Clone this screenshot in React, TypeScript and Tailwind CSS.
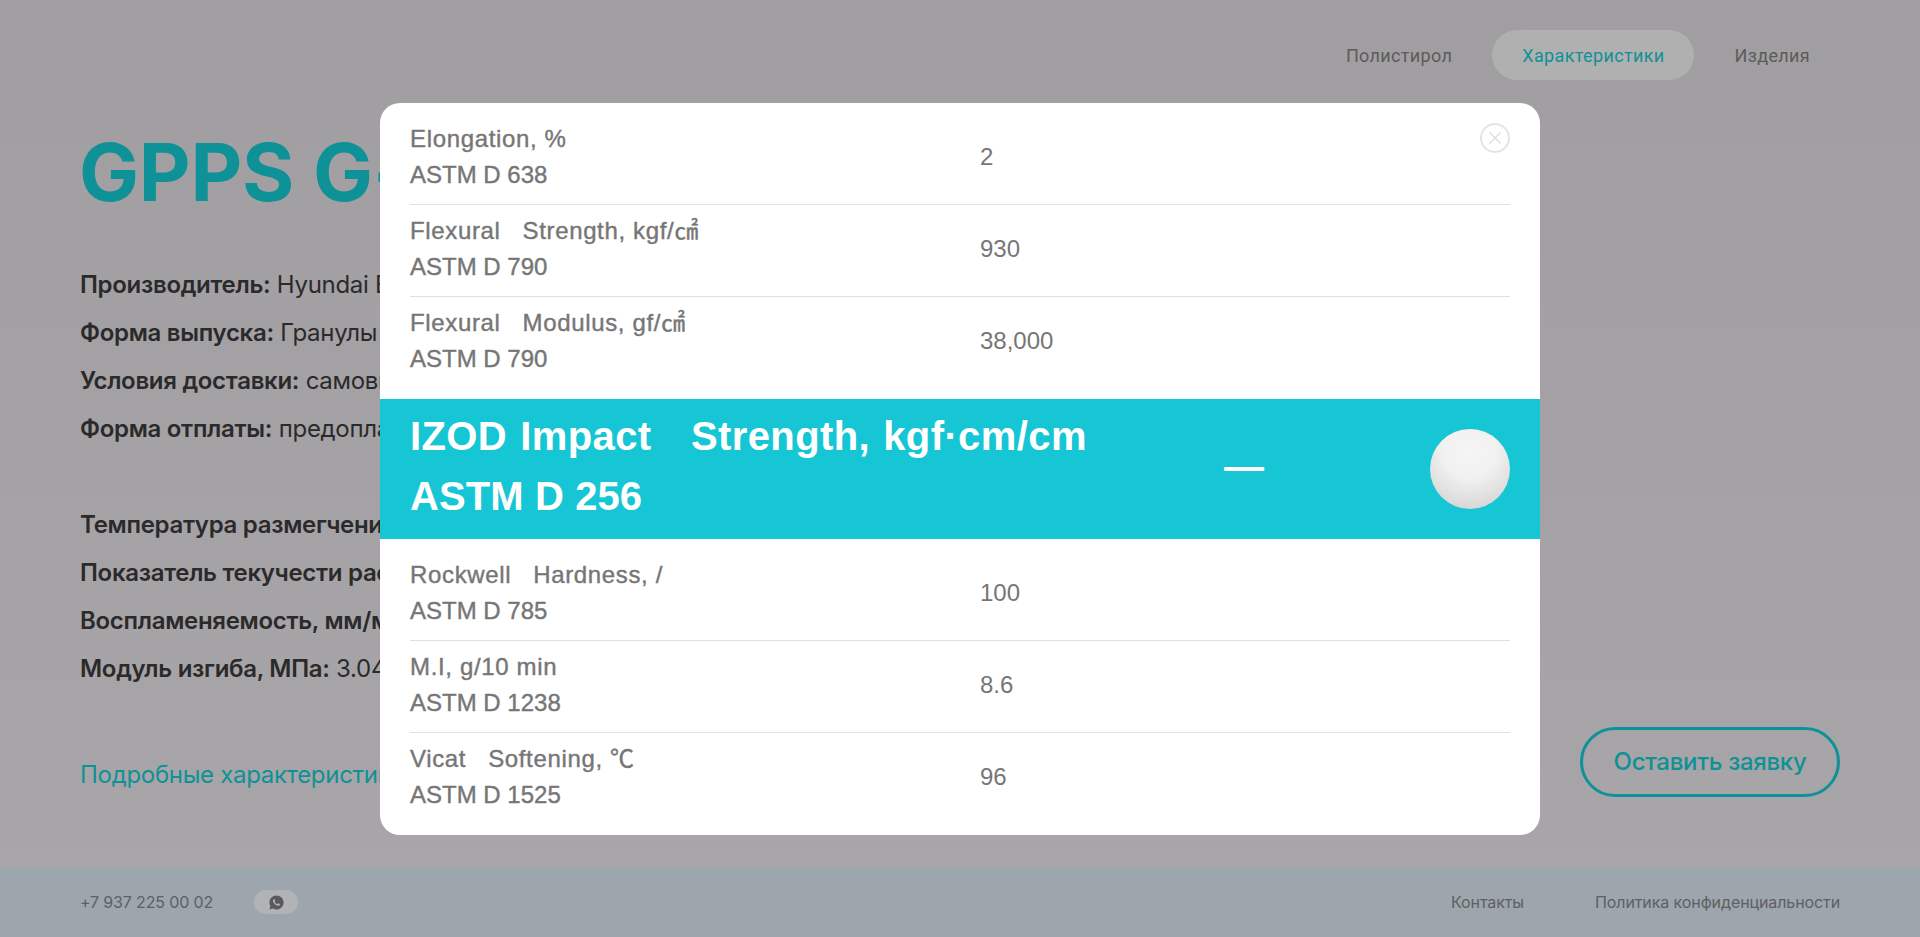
import React from "react";
import { RiWhatsappFill } from "react-icons/ri";

const sans = "font-['Inter','Noto_Sans',sans-serif]";
const modalFont = "font-['Liberation_Sans','Noto_Sans_CJK_KR',sans-serif]";

function Row({ a, b, v, last }: { a: string; b: string; v: string; last?: boolean }) {
  return (
    <div className={`flex items-center border-b pt-2 pb-[11px] ${last ? "border-transparent" : "border-[#e0e0e0]"}`}>
      <div className="w-[570px] shrink-0 whitespace-pre text-[24px] leading-[36px] text-[#767676] [-webkit-text-stroke:0.4px_#767676]">
        <div className="tracking-[0.65px]">{a}</div>
        <div>{b}</div>
      </div>
      <div className="text-[24px] leading-[36px] text-[#767676]">{v}</div>
    </div>
  );
}

function Spec({ k, v }: { k: string; v: string }) {
  return (
    <p className="h-12 whitespace-nowrap text-[24px] leading-[48px] tracking-[-0.3px] text-[#2a2a2b]">
      <b className="font-semibold">{k}</b> {v}
    </p>
  );
}

export default function App() {
  return (
    <div className={`relative flex h-[937px] flex-col overflow-hidden bg-linear-to-b from-[#a09ea0] to-[#a9a6a9] ${sans}`}>
      <header className="flex justify-end gap-[10px] pt-[30px] pr-20 font-['Roboto',sans-serif] text-[18px] tracking-[0.35px] text-[#5c5b5c]">
        <a className="flex h-[50px] items-center px-[30px]">Полистирол</a>
        <a className="flex h-[50px] items-center rounded-full bg-[#b0b0b0] px-[30px] text-[#0f9198]">Характеристики</a>
        <a className="flex h-[50px] items-center px-[30px]">Изделия</a>
      </header>

      <main className="flex flex-1 justify-between px-20 pt-[44px] pb-[70px]">
        <div className="w-[300px] overflow-hidden">
          <h1 className="-ml-px whitespace-nowrap text-[80px] leading-[96px] font-bold tracking-[-0.2px] text-[#0f9198]">GPPS G-144</h1>
          <div className="mt-[41px]">
            <Spec k="Производитель:" v="Hyundai Engineering Plastics" />
            <Spec k="Форма выпуска:" v="Гранулы" />
            <Spec k="Условия доставки:" v="самовывоз" />
            <Spec k="Форма отплаты:" v="предоплата" />
          </div>
          <div className="mt-12">
            <Spec k="Температура размегчения, °С:" v="96" />
            <Spec k="Показатель текучести расплава:" v="8.6" />
            <Spec k="Воспламеняемость, мм/мин:" v="38" />
            <Spec k="Модуль изгиба, МПа:" v="3.04" />
          </div>
          <a className="mt-16 block whitespace-nowrap text-[24px] leading-[36px] tracking-[-0.3px] text-[#0f9198]">Подробные характеристики</a>
        </div>
        <a className="flex h-[70px] w-[260px] items-center justify-center self-end rounded-full border-[3px] border-[#0f9198] text-[24px] font-medium tracking-[-0.3px] text-[#0f9198]">
          Оставить заявку
        </a>
      </main>

      <footer className="flex h-[70px] items-center justify-between bg-[#9da6ac] px-20 text-[16px] text-[#5e6062]">
        <div className="flex items-center gap-[41px]">
          <span className="tracking-[-0.15px]">+7 937 225 00 02</span>
          <span className="flex h-6 w-11 items-center justify-center rounded-full bg-[#b1b3b6]">
            <RiWhatsappFill className="text-[17px] text-[#5a5a5a]" />
          </span>
        </div>
        <div className="flex gap-[71px] tracking-[-0.1px]">
          <a>Контакты</a>
          <a>Политика конфиденциальности</a>
        </div>
      </footer>

      <div className={`absolute top-[103px] left-[380px] w-[1160px] overflow-hidden rounded-[20px] bg-white py-[10px] ${modalFont}`}>
        <button className="absolute top-5 right-[30px] flex h-[30px] w-[30px] items-center justify-center rounded-full border-2 border-[#e4e4e4]">
          <svg width="14" height="14" viewBox="0 0 14 14" fill="none" stroke="#dcdcdc" strokeWidth="1.2">
            <path d="M1.5 1.5l11 11M12.5 1.5l-11 11" />
          </svg>
        </button>
        <div className="px-[30px]">
          <Row a="Elongation, %" b="ASTM D 638" v="2" />
          <Row a="Flexural   Strength, kgf/㎠" b="ASTM D 790" v="930" />
          <Row a="Flexural   Modulus, gf/㎠" b="ASTM D 790" v="38,000" last />
        </div>
        <div className="my-[10px] flex h-[140px] items-center bg-[#16c6d4] px-[30px] text-white">
          <div className="-mt-[6px] w-[814px] shrink-0 whitespace-pre text-[40px] leading-[60px] font-bold">
            <div className="tracking-[0.4px] [word-spacing:1.6px]">IZOD Impact   Strength, kgf·cm/cm</div>
            <div className="tracking-[0.1px]">ASTM D 256</div>
          </div>
          <div className="-mt-[6px] text-[40px] leading-[60px] font-bold">—</div>
          <span className="ml-auto h-20 w-20 rounded-full bg-[radial-gradient(circle_at_50%_28%,#f5f5f5_0%,#f1f1f1_38%,#dadada_78%,#bdbdbd_100%)]" />
        </div>
        <div className="px-[30px]">
          <Row a="Rockwell   Hardness, /" b="ASTM D 785" v="100" />
          <Row a="M.I, g/10 min" b="ASTM D 1238" v="8.6" />
          <Row a="Vicat   Softening, ℃" b="ASTM D 1525" v="96" last />
        </div>
      </div>
    </div>
  );
}
